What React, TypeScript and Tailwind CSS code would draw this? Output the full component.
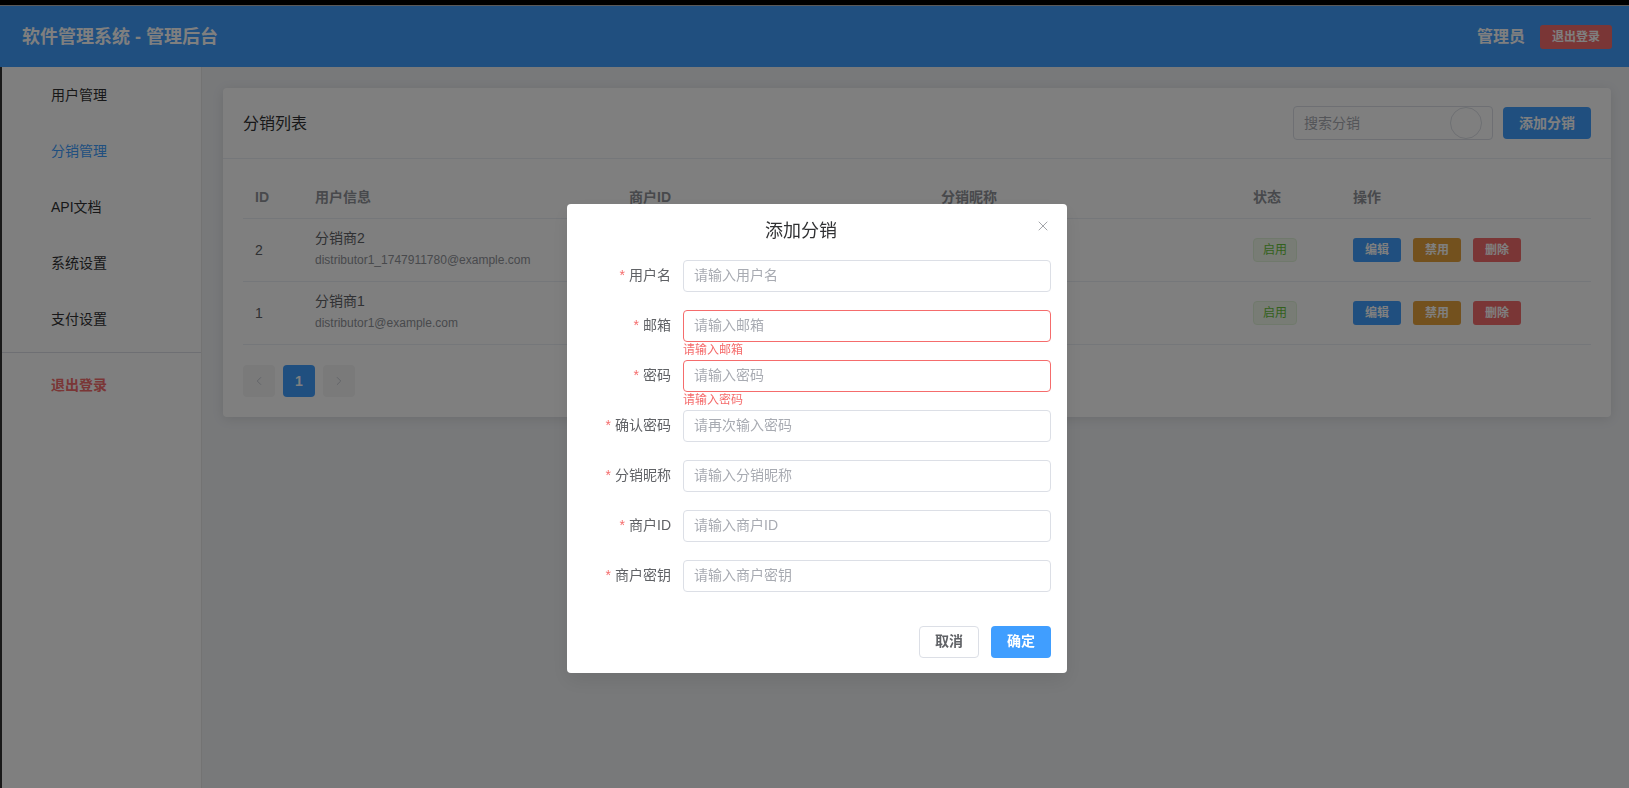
import React from 'react';
import { ChevronLeft, ChevronRight, X } from 'lucide-react';

const MENU = ['用户管理', '分销管理', 'API文档', '系统设置', '支付设置'];

const ROWS = [
  { id: 2, name: '分销商2', email: 'distributor1_1747911780@example.com' },
  { id: 1, name: '分销商1', email: 'distributor1@example.com' },
];

const FIELDS = [
  { label: '用户名', placeholder: '请输入用户名' },
  { label: '邮箱', placeholder: '请输入邮箱', error: '请输入邮箱' },
  { label: '密码', placeholder: '请输入密码', error: '请输入密码' },
  { label: '确认密码', placeholder: '请再次输入密码' },
  { label: '分销昵称', placeholder: '请输入分销昵称' },
  { label: '商户ID', placeholder: '请输入商户ID' },
  { label: '商户密钥', placeholder: '请输入商户密钥' },
];

const Sidebar = () => (
  <aside className="w-[200px] shrink-0 border-r border-[#e6e6e6] bg-white text-sm">
    {MENU.map((item, i) => (
      <div
        key={item}
        className={`flex h-14 items-center pl-[49px] ${i === 1 ? 'text-[#409eff]' : 'text-[#303133]'}`}
      >
        {item}
      </div>
    ))}
    <div className="my-[5px] h-px bg-[#dcdfe6]" />
    <div className="flex h-14 items-center pb-[2px] pl-[49px] font-bold text-[#f56c6c]">退出登录</div>
  </aside>
);

const ListCard = () => (
  <div className="rounded bg-white shadow-[0_2px_12px_rgba(0,0,0,0.1)]">
    <div className="flex h-[71px] items-center justify-between border-b border-[#ebeef5] px-5">
      <span className="pt-[2px] text-base text-[#303133]">分销列表</span>
      <div className="flex items-center gap-[10px]">
        <div className="flex h-[34px] w-[200px] items-center justify-between rounded border border-[#dcdfe6] bg-white pl-[10px] pr-[10px]">
          <span className="text-sm text-[#a8abb2]">搜索分销</span>
          <span className="h-8 w-8 rounded-full border border-[#dcdfe6]" />
        </div>
        <button className="h-8 w-[88px] rounded bg-[#409eff] text-sm font-bold text-white">添加分销</button>
      </div>
    </div>
    <div className="px-5 pb-5 pt-[19px]">
      <table className="w-full table-fixed border-collapse text-sm text-[#606266]">
        <colgroup>
          <col className="w-[60px]" />
          <col className="w-[314px]" />
          <col className="w-[312px]" />
          <col className="w-[312px]" />
          <col className="w-[100px]" />
          <col />
        </colgroup>
        <thead>
          <tr className="h-[40px] border-b border-[#ebeef5] text-left text-[#909399]">
            {['ID', '用户信息', '商户ID', '分销昵称', '状态', '操作'].map((h) => (
              <th key={h} className="px-3 pb-[2px] font-bold">
                {h}
              </th>
            ))}
          </tr>
        </thead>
        <tbody>
          {ROWS.map((row) => (
            <tr key={row.id} className="h-[63px] border-b border-[#ebeef5]">
              <td className="px-3">{row.id}</td>
              <td className="px-3">
                <div className="pb-[2px]">
                  <div className="leading-5">{row.name}</div>
                  <div className="mt-[3px] text-xs leading-[18px] text-[#909399]">{row.email}</div>
                </div>
              </td>
              <td className="px-3" />
              <td className="px-3" />
              <td className="px-3">
                <span className="flex h-6 w-11 items-center justify-center rounded border border-[#e1f3d8] bg-[#f0f9eb] text-xs text-[#67c23a]">
                  启用
                </span>
              </td>
              <td className="px-3">
                <div className="flex gap-3 text-xs font-bold text-white">
                  <button className="h-6 w-12 rounded-[3px] bg-[#409eff]">编辑</button>
                  <button className="h-6 w-12 rounded-[3px] bg-[#e6a23c]">禁用</button>
                  <button className="h-6 w-12 rounded-[3px] bg-[#f56c6c]">删除</button>
                </div>
              </td>
            </tr>
          ))}
        </tbody>
      </table>
      <div className="mt-5 flex gap-2 text-[#c0c4cc]">
        <span className="flex h-8 w-8 items-center justify-center rounded-sm bg-[#f4f4f5]">
          <ChevronLeft size={14} strokeWidth={1.5} />
        </span>
        <span className="flex h-8 w-8 items-center justify-center rounded-sm bg-[#409eff] text-sm font-bold text-white">
          1
        </span>
        <span className="flex h-8 w-8 items-center justify-center rounded-sm bg-[#f4f4f5]">
          <ChevronRight size={14} strokeWidth={1.5} />
        </span>
      </div>
    </div>
  </div>
);

const AddDialog = () => (
  <div className="fixed inset-0 flex items-start justify-center bg-black/50 pt-[204px] pl-[5px]">
    <div className="relative w-[500px] rounded bg-white shadow-[0_8px_20px_rgba(0,0,0,0.08)]">
      <div className="flex h-14 items-center justify-center pb-[2px] pr-8 text-lg text-[#303133]">添加分销</div>
      <X size={16} strokeWidth={1.25} className="absolute right-4 top-[14px] text-[#909399]" />
      <div className="pr-4">
        {FIELDS.map((f) => (
          <div key={f.label} className="flex h-[50px] text-sm">
            <label className="flex h-8 w-[116px] items-center justify-end pb-[2px] pr-3 text-[#606266]">
              <span className="mr-1 text-[#f56c6c]">*</span>
              {f.label}
            </label>
            <div className="flex-1">
              <div
                className={`flex h-8 items-center rounded border px-[10px] pb-[2px] text-[#a8abb2] ${
                  f.error ? 'border-[#f56c6c]' : 'border-[#dcdfe6]'
                }`}
              >
                {f.placeholder}
              </div>
              {f.error && <div className="text-xs leading-4 text-[#f56c6c]">{f.error}</div>}
            </div>
          </div>
        ))}
      </div>
      <div className="flex justify-end gap-3 pr-4 pb-[15px] pt-4">
        <button className="h-8 w-[60px] rounded border border-[#dcdfe6] bg-white pb-[2px] text-sm font-bold text-[#606266]">
          取消
        </button>
        <button className="h-8 w-[60px] rounded bg-[#409eff] pb-[2px] text-sm font-bold text-white">确定</button>
      </div>
    </div>
  </div>
);

export default function App() {
  return (
    <div className="flex h-screen flex-col overflow-hidden bg-[#333333] pl-[2px] font-['Liberation_Sans','Noto_Sans_CJK_SC',sans-serif]">
      <div className="-ml-[2px] h-[5px] shrink-0 bg-black" />
      <header className="-ml-[2px] flex h-[62px] shrink-0 items-center justify-between border-t border-[#b4b4b4] bg-[#409eff] pl-[22px] pr-[17px] text-white">
        <span className="text-lg font-bold">软件管理系统 - 管理后台</span>
        <div className="flex items-center gap-[15px]">
          <span className="text-base font-bold">管理员</span>
          <button className="h-6 w-[72px] rounded-[3px] bg-[#f56c6c] text-xs font-bold text-white">退出登录</button>
        </div>
      </header>
      <div className="flex min-h-0 flex-1">
        <Sidebar />
        <main className="flex-1 bg-[#f0f2f5] pb-5 pl-[21px] pr-[18px] pt-[21px]">
          <ListCard />
        </main>
      </div>
      <AddDialog />
    </div>
  );
}
